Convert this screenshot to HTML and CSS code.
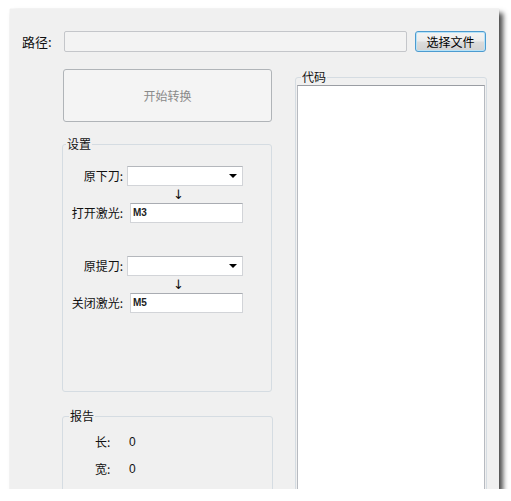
FILE: index.html
```html
<!DOCTYPE html>
<html>
<head>
<meta charset="utf-8">
<link rel="stylesheet" href="styles.css">
</head>
<body>
<div class="window">
  <div class="path-row">
    <span class="path-label">路径:</span>
    <div class="path-input"></div>
    <button class="btn-file">选择文件</button>
  </div>
  <div class="main">
    <div class="left">
      <button class="btn-start" disabled>开始转换</button>
      <fieldset class="group settings">
        <legend>设置</legend>
        <div class="row"><span class="lbl">原下刀:</span><div class="combo"><i class="caret"></i></div></div>
        <div class="arrow">↓</div>
        <div class="row"><span class="lbl">打开激光:</span><div class="text">M3</div></div>
        <div class="row row-gap"><span class="lbl">原提刀:</span><div class="combo"><i class="caret"></i></div></div>
        <div class="arrow">↓</div>
        <div class="row"><span class="lbl">关闭激光:</span><div class="text">M5</div></div>
      </fieldset>
      <fieldset class="group report">
        <legend>报告</legend>
        <div class="stat"><span class="stat-lbl">长:</span><span class="stat-val">0</span></div>
        <div class="stat"><span class="stat-lbl">宽:</span><span class="stat-val">0</span></div>
      </fieldset>
    </div>
    <fieldset class="group code">
      <legend>代码</legend>
      <div class="codebox"></div>
    </fieldset>
  </div>
</div>
</body>
</html>
```
FILE: styles.css
```css
html, body {
  margin: 0;
  padding: 0;
  background: #ffffff;
}
body {
  font-family: "Noto Sans CJK SC", "Noto Sans", sans-serif;
  font-size: 12px;
  color: #111;
}
.window {
  margin: 9px 0 0 10px;
  width: 489px;
  height: 480px;
  background: #f0f0f0;
  overflow: hidden;
  box-shadow: 4px 4px 5px rgba(0, 0, 0, 0.7), 0 0 1px rgba(0, 0, 0, 0.15);
}
.path-row {
  display: flex;
  align-items: center;
  margin-top: 22px;
  height: 21px;
}
.path-label {
  width: 42px;
  margin-left: 12px;
  font-size: 13px;
  line-height: 21px;
}
.path-input {
  box-sizing: border-box;
  width: 343px;
  height: 21px;
  border: 1px solid #c4c6ca;
  border-radius: 2px;
  background: #f3f3f3;
}
.btn-file {
  box-sizing: border-box;
  margin-left: 8px;
  width: 71px;
  height: 21px;
  padding: 0;
  border: 1px solid #4c9bd0;
  border-radius: 3px;
  background: linear-gradient(#f4f4f4 0%, #ececec 48%, #dcdcdc 52%, #d2d2d2 100%);
  box-shadow: inset 0 0 0 1px #b8e3f8;
  font-family: "Noto Sans CJK SC", sans-serif;
  font-size: 12px;
  line-height: 17px;
  color: #000;
}
.main {
  display: flex;
  align-items: flex-start;
  margin-top: 17px;
  padding-left: 52px;
  gap: 22px;
}
.left {
  width: 211px;
  display: flex;
  flex-direction: column;
  align-items: flex-start;
}
.btn-start {
  box-sizing: border-box;
  margin-left: 1px;
  width: 209px;
  height: 53px;
  border: 1px solid #b0b4b8;
  border-radius: 3px;
  background: #f4f4f4;
  font-family: "Noto Sans CJK SC", sans-serif;
  font-size: 12px;
  color: #8a8a8a;
  padding: 0;
}
.group {
  box-sizing: border-box;
  margin: 0;
  padding: 0;
  border: 1px solid #d5dce2;
  border-radius: 3px;
  min-width: 0;
}
.group legend {
  padding: 0 1px;
  margin-left: 3px;
  font-size: 12px;
  line-height: 16px;
  color: #111;
}
.settings {
  margin-top: 14px;
  width: 210px;
  height: 256px;
  padding-top: 14px;
}
.row {
  display: flex;
  align-items: center;
  height: 20px;
}
.row-gap {
  margin-top: 33px;
}
.lbl {
  width: 60px;
  text-align: right;
  line-height: 20px;
  white-space: nowrap;
}
.combo {
  position: relative;
  box-sizing: border-box;
  margin-left: 4px;
  width: 116px;
  height: 20px;
  background: #fff;
  border: 1px solid #d2d4d8;
  border-top-color: #b4b7bc;
}
.caret {
  position: absolute;
  right: 5px;
  top: 7px;
  width: 0;
  height: 0;
  border-left: 4px solid transparent;
  border-right: 4px solid transparent;
  border-top: 4px solid #000;
}
.text {
  box-sizing: border-box;
  margin-left: 7px;
  width: 113px;
  height: 20px;
  background: #fff;
  border: 1px solid #d2d4d8;
  border-top-color: #a9acb2;
  padding-left: 2px;
  font-family: "Liberation Sans", sans-serif;
  font-size: 10px;
  font-weight: bold;
  line-height: 17px;
  color: #222;
}
.arrow {
  height: 17px;
  padding-left: 110px;
  font-family: "DejaVu Sans", sans-serif;
  font-size: 13px;
  line-height: 17px;
  color: #111;
}
.report {
  margin-top: 16px;
  width: 211px;
  height: 120px;
  padding-top: 8px;
}
.report legend {
  margin-left: 6px;
}
.stat {
  display: flex;
  height: 20px;
  line-height: 20px;
  margin-bottom: 7px;
}
.stat-lbl {
  margin-left: 32px;
  width: 34px;
}
.stat-val {
  font-family: "Liberation Sans", sans-serif;
  font-size: 12px;
}
.code {
  width: 192px;
  height: 440px;
  padding: 0 1px;
}
.code legend {
  margin-left: 4px;
}
.codebox {
  box-sizing: border-box;
  width: 188px;
  height: 420px;
  background: #fff;
  border: 1px solid #b7bac0;
  border-top-color: #9a9da3;
}
```
